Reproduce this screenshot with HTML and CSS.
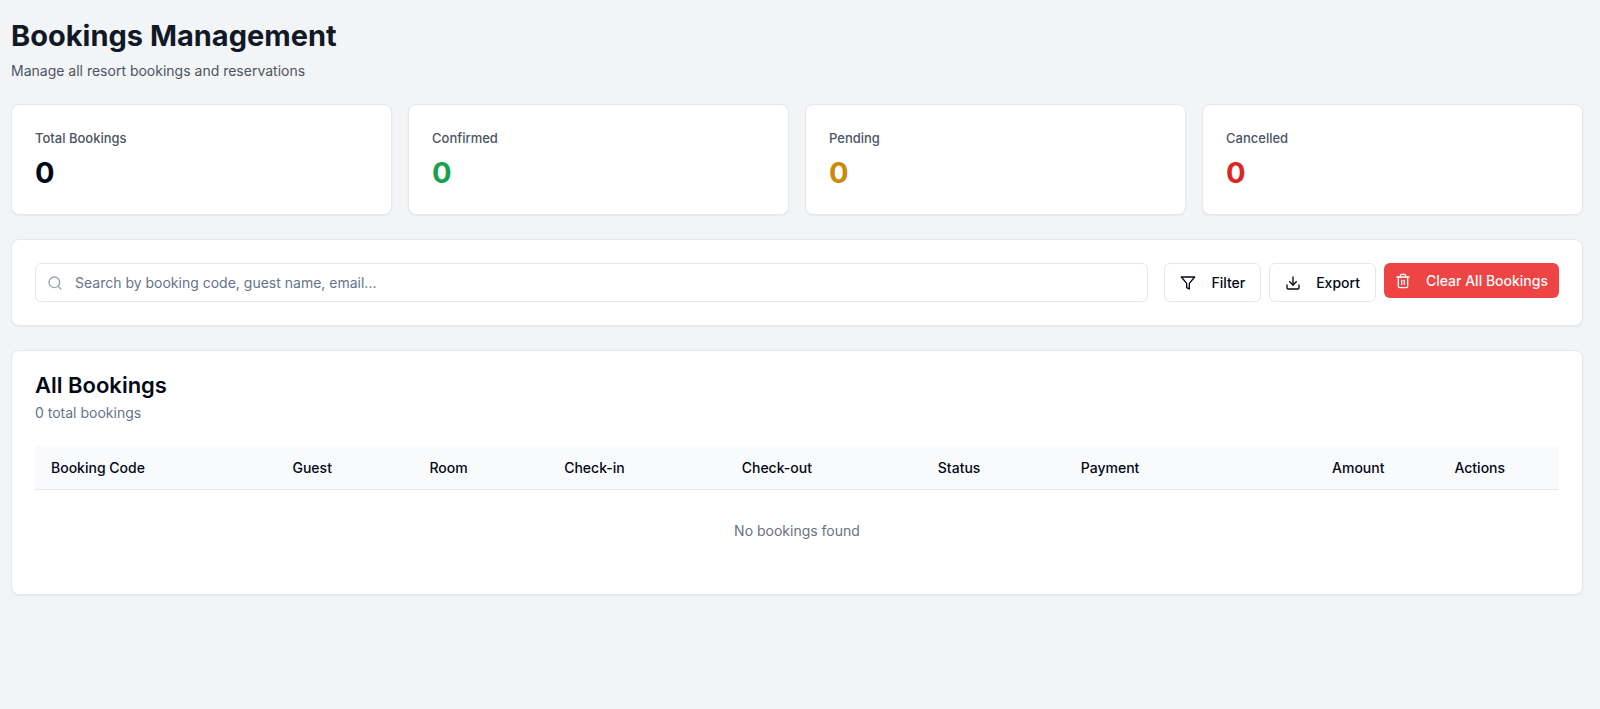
FILE: index.html
```html
<!DOCTYPE html>
<html lang="en">
<head>
  <meta charset="UTF-8">
  <meta name="viewport" content="width=device-width, initial-scale=1.0">
  <title>Bookings Management</title>
  <link rel="stylesheet" href="styles.css">
</head>
<body>
  <main class="page">
    <header class="page-header">
      <h1>Bookings Management</h1>
      <p>Manage all resort bookings and reservations</p>
    </header>

    <!-- Stats -->
    <section class="stats">
      <div class="card stat">
        <p class="stat-label">Total Bookings</p>
        <p class="stat-value">0</p>
      </div>
      <div class="card stat">
        <p class="stat-label">Confirmed</p>
        <p class="stat-value confirmed">0</p>
      </div>
      <div class="card stat">
        <p class="stat-label">Pending</p>
        <p class="stat-value pending">0</p>
      </div>
      <div class="card stat">
        <p class="stat-label">Cancelled</p>
        <p class="stat-value cancelled">0</p>
      </div>
    </section>

    <!-- Search and actions -->
    <section class="card toolbar">
      <label class="search">
        <svg class="icon" viewBox="0 0 24 24"><circle cx="11" cy="11" r="8"/><path d="m21 21-4.3-4.3"/></svg>
        <input type="text" name="search" aria-label="Search bookings" placeholder="Search by booking code, guest name, email...">
      </label>
      <div class="actions">
        <button type="button" class="btn">
          <svg class="icon" viewBox="0 0 24 24"><path d="M22 3H2l8 9.46V19l4 2v-8.54L22 3z"/></svg>
          Filter
        </button>
        <button type="button" class="btn">
          <svg class="icon" viewBox="0 0 24 24"><path d="M21 15v4a2 2 0 0 1-2 2H5a2 2 0 0 1-2-2v-4"/><path d="m7 10 5 5 5-5"/><path d="M12 15V3"/></svg>
          Export
        </button>
        <button type="button" class="btn btn-danger">
          <svg class="icon" viewBox="0 0 24 24"><path d="M3 6h18"/><path d="M19 6v14a2 2 0 0 1-2 2H7a2 2 0 0 1-2-2V6"/><path d="M8 6V4a2 2 0 0 1 2-2h4a2 2 0 0 1 2 2v2"/><path d="M10 11v6"/><path d="M14 11v6"/></svg>
          Clear All Bookings
        </button>
      </div>
    </section>

    <!-- Bookings table -->
    <section class="card bookings">
      <h2>All Bookings</h2>
      <p class="bookings-count">0 total bookings</p>
      <table>
        <thead>
          <tr>
            <th>Booking Code</th>
            <th>Guest</th>
            <th>Room</th>
            <th>Check-in</th>
            <th>Check-out</th>
            <th>Status</th>
            <th>Payment</th>
            <th class="right">Amount</th>
            <th class="center">Actions</th>
          </tr>
        </thead>
        <tbody>
          <tr>
            <td colspan="9" class="empty">No bookings found</td>
          </tr>
        </tbody>
      </table>
    </section>
  </main>
</body>
</html>
```
FILE: styles.css
```css
* {
  box-sizing: border-box;
}
body {
  margin: 0;
  background-color: #f3f4f6;
  color: #020817;
  font-family: Inter, sans-serif;
  font-size: 14px;
  line-height: 20px;
}
h1, h2, p {
  margin: 0;
}
.page {
  display: flex;
  flex-direction: column;
  gap: 24px;
  padding: 18px 17px 24px 11px;
}
h1 {
  color: #111827;
  font-size: 29px;
  font-weight: 700;
  line-height: 36px;
}
.page-header p {
  margin-top: 8px;
  color: #4b5563;
  line-height: 18px;
}
.card {
  background-color: #fff;
  border: 1px solid #e2e8f0;
  border-radius: 8px;
  box-shadow: 0 1px 2px rgba(0, 0, 0, 0.05);
  padding: 23px;
}

/* Stats */
.stats {
  display: grid;
  grid-template-columns: repeat(4, 1fr);
  gap: 16px;
}
.stat-label {
  color: #4b5563;
  font-size: 13px;
  font-weight: 500;
}
.stat-value {
  margin-top: 7px;
  font-size: 29px;
  font-weight: 700;
  line-height: 36px;
}
.confirmed {
  color: #16a34a;
}
.pending {
  color: #ca8a04;
}
.cancelled {
  color: #dc2626;
}

/* Search and actions */
.icon {
  width: 16px;
  height: 16px;
  flex: none;
  fill: none;
  stroke: currentColor;
  stroke-width: 2;
  stroke-linecap: round;
  stroke-linejoin: round;
}
.toolbar {
  display: flex;
  gap: 16px;
}
.search {
  flex: 1;
  display: flex;
  align-items: center;
  gap: 12px;
  padding: 0 11px;
  border: 1px solid #e2e8f0;
  border-radius: 6px;
  color: #9ca3af;
}
.search input {
  flex: 1;
  padding: 0;
  border: none;
  outline: none;
  background: none;
  color: #020817;
  font: inherit;
}
.search input::placeholder {
  color: #64748b;
}
.actions {
  display: flex;
  align-items: flex-start;
  gap: 8px;
}
.btn {
  display: flex;
  align-items: center;
  gap: 15px;
  height: 39px;
  padding: 0 15px;
  border: 1px solid #e2e8f0;
  border-radius: 6px;
  background-color: #fff;
  color: #020817;
  font: inherit;
  font-weight: 500;
  cursor: pointer;
}
.btn-danger {
  height: 35px;
  padding: 0 11px;
  border: none;
  background-color: #ef4444;
  color: #f8fafc;
}

/* Bookings table */
h2 {
  font-size: 22px;
  font-weight: 600;
  line-height: 22px;
}
.bookings-count {
  margin-top: 7px;
  color: #64748b;
}
table {
  width: 100%;
  margin-top: 23px;
  border-collapse: collapse;
}
th {
  padding: 12px 16px 11px;
  background-color: #f9fafb;
  border-bottom: 1px solid #e2e8f0;
  font-weight: 500;
  text-align: left;
}
.right {
  text-align: right;
}
.center {
  text-align: center;
}
.empty {
  padding: 31px 16px 30px;
  color: #6b7280;
  text-align: center;
}
```
